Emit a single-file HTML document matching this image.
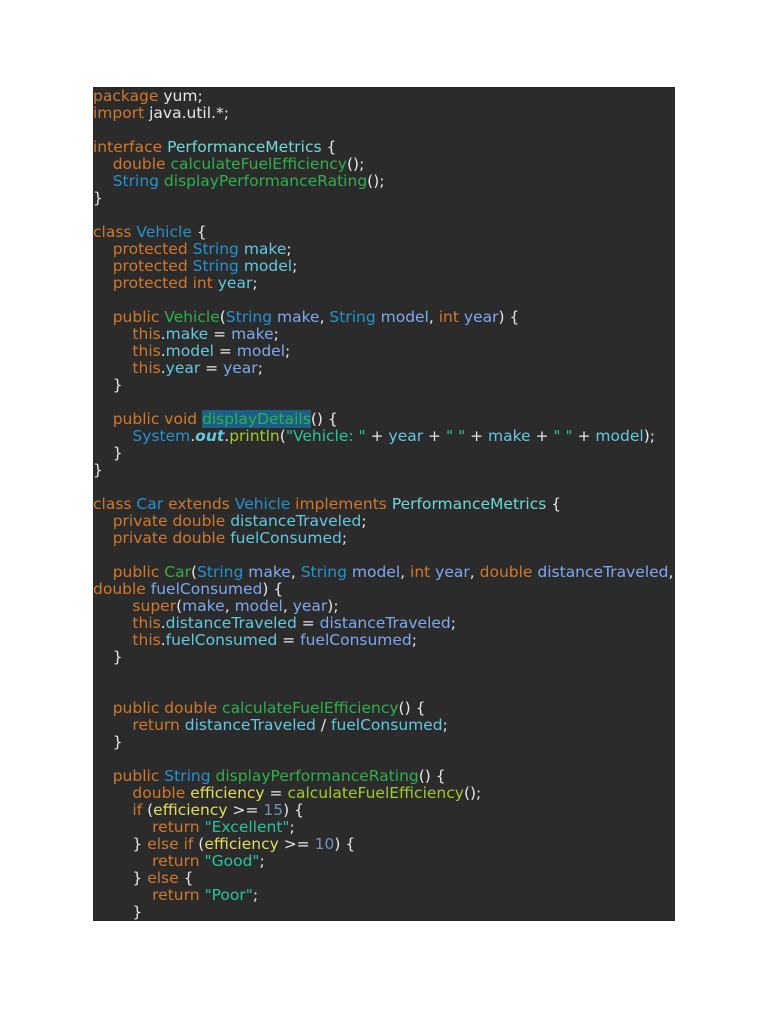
<!DOCTYPE html>
<html><head><meta charset="utf-8"><style>
html,body{margin:0;padding:0;background:#fff;width:768px;height:1024px;overflow:hidden}
.box{position:absolute;left:93px;top:87px;width:582px;height:834px;background:#2b2b2b;overflow:hidden}
pre{margin:0;padding-top:1px;font-family:"DejaVu Sans","Liberation Sans",sans-serif;font-size:15.5px;line-height:17px;color:#e6e6e6;white-space:pre}
.k{color:#d2782c}.c{color:#6fd8d8}.s{color:#2592cc}.m{color:#2fb04c}.f{color:#62c8e0}.p{color:#7ea8f0}
.y{color:#e4dc5c}.n{color:#6f93b8}.t{color:#27c3a0}.g{color:#9ccc2c}
.hl{background:#1c5e86}
</style></head><body><div class="box"><pre><span class="k">package</span> yum;
<span class="k">import</span> java.util.*;

<span class="k">interface</span> <span class="c">PerformanceMetrics</span> {
    <span class="k">double</span> <span class="m">calculateFuelEfficiency</span>();
    <span class="s">String</span> <span class="m">displayPerformanceRating</span>();
}

<span class="k">class</span> <span class="s">Vehicle</span> {
    <span class="k">protected</span> <span class="s">String</span> <span class="f">make</span>;
    <span class="k">protected</span> <span class="s">String</span> <span class="f">model</span>;
    <span class="k">protected int</span> <span class="f">year</span>;

    <span class="k">public</span> <span class="m">Vehicle</span>(<span class="s">String</span> <span class="p">make</span>, <span class="s">String</span> <span class="p">model</span>, <span class="k">int</span> <span class="p">year</span>) {
        <span class="k">this</span>.<span class="f">make</span> = <span class="p">make</span>;
        <span class="k">this</span>.<span class="f">model</span> = <span class="p">model</span>;
        <span class="k">this</span>.<span class="f">year</span> = <span class="p">year</span>;
    }

    <span class="k">public void</span> <span class="m hl">displayDetails</span>() {
        <span class="s">System</span>.<b><i class="f">out</i></b>.<span class="g">println</span>(<span class="t">"Vehicle: "</span> + <span class="f">year</span> + <span class="t">" "</span> + <span class="f">make</span> + <span class="t">" "</span> + <span class="f">model</span>);
    }
}

<span class="k">class</span> <span class="s">Car</span> <span class="k">extends</span> <span class="s">Vehicle</span> <span class="k">implements</span> <span class="c">PerformanceMetrics</span> {
    <span class="k">private double</span> <span class="f">distanceTraveled</span>;
    <span class="k">private double</span> <span class="f">fuelConsumed</span>;

    <span class="k">public</span> <span class="m">Car</span>(<span class="s">String</span> <span class="p">make</span>, <span class="s">String</span> <span class="p">model</span>, <span class="k">int</span> <span class="p">year</span>, <span class="k">double</span> <span class="p">distanceTraveled</span>,
<span class="k">double</span> <span class="p">fuelConsumed</span>) {
        <span class="k">super</span>(<span class="p">make</span>, <span class="p">model</span>, <span class="p">year</span>);
        <span class="k">this</span>.<span class="f">distanceTraveled</span> = <span class="p">distanceTraveled</span>;
        <span class="k">this</span>.<span class="f">fuelConsumed</span> = <span class="p">fuelConsumed</span>;
    }


    <span class="k">public double</span> <span class="m">calculateFuelEfficiency</span>() {
        <span class="k">return</span> <span class="f">distanceTraveled</span> / <span class="f">fuelConsumed</span>;
    }

    <span class="k">public</span> <span class="s">String</span> <span class="m">displayPerformanceRating</span>() {
        <span class="k">double</span> <span class="y">efficiency</span> = <span class="g">calculateFuelEfficiency</span>();
        <span class="k">if</span> (<span class="y">efficiency</span> &gt;= <span class="n">15</span>) {
            <span class="k">return</span> <span class="t">"Excellent"</span>;
        } <span class="k">else if</span> (<span class="y">efficiency</span> &gt;= <span class="n">10</span>) {
            <span class="k">return</span> <span class="t">"Good"</span>;
        } <span class="k">else</span> {
            <span class="k">return</span> <span class="t">"Poor"</span>;
        }
</pre></div></body></html>
